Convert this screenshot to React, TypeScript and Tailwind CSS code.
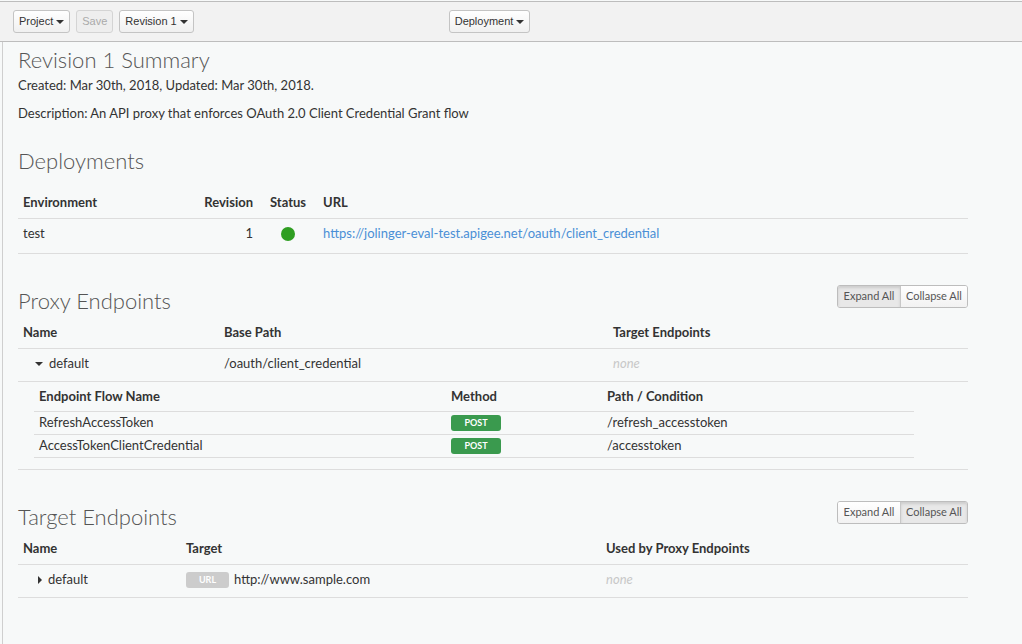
import React from "react";

const caret = (
  <span className="ml-[3px] inline-block h-0 w-0 border-x-[4px] border-t-[4px] border-x-transparent border-t-[#333]" />
);

function ToolButton({ label, disabled, dropdown }: { label: string; disabled?: boolean; dropdown?: boolean }) {
  return (
    <button
      className={
        disabled
          ? "flex h-[23px] items-center rounded-[3px] border border-[#d4d4d4] bg-[#eeeeee] px-[5px] text-[11px] text-[#aaa]"
          : "flex h-[23px] items-center rounded-[3px] border border-[#c4c4c4] bg-gradient-to-b from-white to-[#f0f0f0] px-[5px] text-[11px] text-[#333]"
      }
    >
      {label}
      {dropdown && caret}
    </button>
  );
}

function ToggleGroup({ active }: { active: "expand" | "collapse" }) {
  const on = "bg-[#e8e8e8] shadow-[inset_0_2px_3px_rgba(0,0,0,0.12)]";
  const off = "bg-gradient-to-b from-white to-[#f2f2f2]";
  return (
    <div className="flex h-[23px] overflow-hidden rounded-[3px] border border-[#bdbdbd] text-[11px] text-[#555]">
      <button className={`w-[63px] border-r border-[#c8c8c8] ${active === "expand" ? on : off}`}>Expand All</button>
      <button className={`w-[66px] ${active === "collapse" ? on : off}`}>Collapse All</button>
    </div>
  );
}

function Badge({ text, color }: { text: string; color: string }) {
  return (
    <span
      className={`flex h-[16px] items-center justify-center rounded-[3px] text-[9px] font-bold text-white ${color}`}
    >
      {text}
    </span>
  );
}

export default function App() {
  return (
    <div className="h-[644px] w-[1022px] overflow-hidden bg-[#f7f9f9] text-[13px] text-[#333]" style={{ fontFamily: "Lato, 'Open Sans', sans-serif" }}>
      {/* toolbar */}
      <div
        className="mt-px flex h-[41px] items-center border-y border-[#bdbdbd] bg-[#f2f2f2] pl-[13px]"
        style={{ fontFamily: "'Liberation Sans', Arial, sans-serif" }}
      >
        <div className="flex gap-[6px]">
          <ToolButton label="Project" dropdown />
          <ToolButton label="Save" disabled />
          <ToolButton label="Revision 1" dropdown />
        </div>
        <div className="ml-[255px]">
          <ToolButton label="Deployment" dropdown />
        </div>
      </div>

      {/* content */}
      <div className="ml-[2px] h-[603px] border-l border-[#cfcfcf] pl-[15px]">
        <div className="w-[950px]">
          <h1 className="pt-[6px] text-[22px] font-light leading-[24px] text-[#555]">Revision 1 Summary</h1>
          <p className="mt-[4px] leading-[18px]">Created: Mar 30th, 2018, Updated: Mar 30th, 2018.</p>
          <p className="mt-[10px] leading-[18px]">Description: An API proxy that enforces OAuth 2.0 Client Credential Grant flow</p>

          {/* Deployments */}
          <h2 className="mt-[27px] text-[22px] font-light leading-[24px] text-[#555]">Deployments</h2>
          <div className="mt-[14px]">
            <div className="flex h-[32px] items-center border-b border-[#ddd] font-bold">
              <div className="w-[177px] pl-[5px]">Environment</div>
              <div className="w-[70px] pr-[12px] text-right">Revision</div>
              <div className="w-[53px] pl-[5px]">Status</div>
              <div className="pl-[5px]">URL</div>
            </div>
            <div className="flex h-[35px] items-center border-b border-[#ddd] pb-[4px]">
              <div className="w-[177px] pl-[5px]">test</div>
              <div className="w-[70px] pr-[12px] text-right">1</div>
              <div className="w-[53px] pl-[16px]">
                <span className="block h-[14px] w-[14px] rounded-full bg-[#2f9e22]" />
              </div>
              <div className="pl-[5px] text-[#4a8fd6]">https://jolinger-eval-test.apigee.net/oauth/client_credential</div>
            </div>
          </div>

          {/* Proxy Endpoints */}
          <div className="mt-[31px] flex items-end justify-between">
            <h2 className="text-[22px] font-light leading-[24px] text-[#555]">Proxy Endpoints</h2>
            <div className="mb-[5px]">
              <ToggleGroup active="expand" />
            </div>
          </div>
          <div className="mt-[4px]">
            <div className="flex h-[32px] items-center border-b border-[#ddd] font-bold">
              <div className="w-[201px] pl-[5px]">Name</div>
              <div className="w-[389px] pl-[5px]">Base Path</div>
              <div className="pl-[5px]">Target Endpoints</div>
            </div>
            <div className="flex h-[33px] items-center border-b border-[#ddd] pb-[3px]">
              <div className="flex w-[201px] items-center pl-[17px]">
                <span className="mr-[6px] inline-block h-0 w-0 border-x-[4px] border-t-[4px] border-x-transparent border-t-[#333]" />
                default
              </div>
              <div className="w-[389px] pl-[5px]">/oauth/client_credential</div>
              <div className="pl-[5px] italic text-[#c8c8c8]">none</div>
            </div>
            <div className="border-b border-[#ddd] pb-[11px]">
              <div className="ml-[16px] w-[880px]">
                <div className="flex h-[30px] items-center border-b border-[#ddd] font-bold">
                  <div className="w-[412px] pl-[5px]">Endpoint Flow Name</div>
                  <div className="w-[156px] pl-[5px]">Method</div>
                  <div className="pl-[5px]">Path / Condition</div>
                </div>
                {[
                  ["RefreshAccessToken", "/refresh_accesstoken"],
                  ["AccessTokenClientCredential", "/accesstoken"],
                ].map(([name, path]) => (
                  <div key={name} className="flex h-[23px] items-start border-b border-[#ddd]">
                    <div className="w-[412px] pl-[5px] pt-[1px] leading-[18px]">{name}</div>
                    <div className="w-[156px] pl-[5px] pt-[3px]">
                      <div className="w-[50px]">
                        <Badge text="POST" color="bg-[#3a9a4e]" />
                      </div>
                    </div>
                    <div className="pl-[5px] pt-[1px] leading-[18px]">{path}</div>
                  </div>
                ))}
              </div>
            </div>
          </div>

          {/* Target Endpoints */}
          <div className="mt-[31px] flex items-end justify-between">
            <h2 className="text-[22px] font-light leading-[24px] text-[#555]">Target Endpoints</h2>
            <div className="mb-[5px]">
              <ToggleGroup active="collapse" />
            </div>
          </div>
          <div className="mt-[4px]">
            <div className="flex h-[32px] items-center border-b border-[#ddd] font-bold">
              <div className="w-[163px] pl-[5px]">Name</div>
              <div className="w-[420px] pl-[5px]">Target</div>
              <div className="pl-[5px]">Used by Proxy Endpoints</div>
            </div>
            <div className="flex h-[33px] items-center border-b border-[#ddd] pb-[3px]">
              <div className="flex w-[163px] items-center pl-[20px]">
                <span className="mr-[6px] inline-block h-0 w-0 border-y-[4px] border-l-[4px] border-y-transparent border-l-[#333]" />
                default
              </div>
              <div className="flex w-[420px] items-center pl-[5px]">
                <div className="w-[43px]">
                  <Badge text="URL" color="bg-[#cccccc]" />
                </div>
                <span className="ml-[5px]">http://www.sample.com</span>
              </div>
              <div className="pl-[5px] italic text-[#c8c8c8]">none</div>
            </div>
          </div>
        </div>
      </div>
    </div>
  );
}
